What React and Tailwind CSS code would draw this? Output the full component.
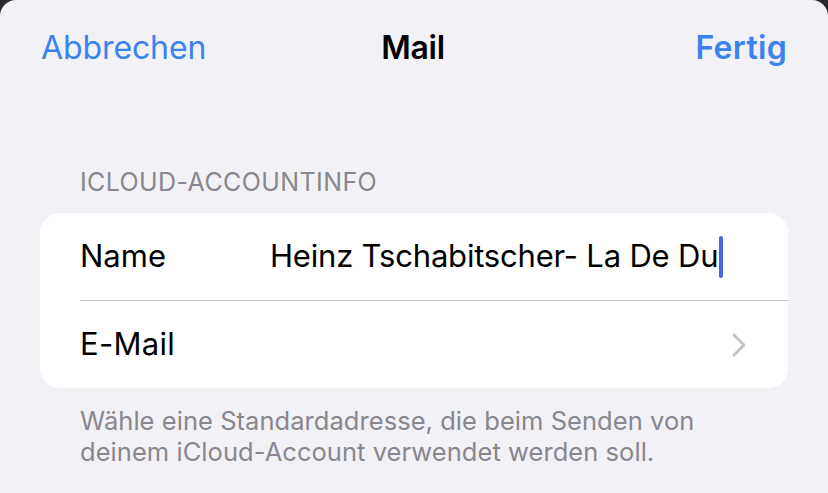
import React from 'react';

const Chevron = () => (
  <svg width="14" height="24" viewBox="0 0 14 24" fill="none">
    <path d="M2 2 L12 12 L2 22" stroke="#c4c4c7" strokeWidth="3" strokeLinecap="round" strokeLinejoin="round" />
  </svg>
);

export default function App() {
  return (
    <div className="w-[828px] h-[493px] bg-[#2a2a2c] overflow-hidden" style={{ fontFamily: 'Inter, "Noto Sans", sans-serif' }}>
      <div className="h-full bg-[#f2f1f6] rounded-t-[16px]">
        {/* nav bar */}
        <div className="grid grid-cols-3 items-center px-[41px] pt-[26px] h-[90px] pb-[20px]">
          <button className="justify-self-start text-[32px] text-[#3a82f0] leading-none tracking-[-0.1px]">Abbrechen</button>
          <h1 className="justify-self-center ml-[-2px] text-[32px] font-semibold text-black leading-none tracking-[-0.3px]">Mail</h1>
          <button className="justify-self-end text-[32px] font-semibold text-[#3a82f0] leading-none tracking-[0.3px]">Fertig</button>
        </div>

        <div className="px-[40px] pt-[80px]">
          <p className="pl-[40px] text-[25px] text-[#88878d] leading-none tracking-[0.4px]">ICLOUD-ACCOUNTINFO</p>

          <div className="mt-[18px] bg-white rounded-[20px]">
            <div className="flex items-center h-[87px] pl-[40px]">
              <span className="w-[190px] text-[31px] text-black tracking-[0px]">Name</span>
              <span className="text-[31px] text-black tracking-[-0.2px]">Heinz Tschabitscher- La De Du</span>
              <span className="ml-[1px] w-[4px] h-[42px] bg-[#4566e0] rounded-full"></span>
            </div>
            <div className="ml-[40px] h-px bg-[#c9c9cc]"></div>
            <div className="flex items-center justify-between h-[87px] pl-[40px] pr-[42px]">
              <span className="text-[31px] text-black tracking-[0.3px]">E-Mail</span>
              <Chevron />
            </div>
          </div>

          <p className="pl-[40px] pr-[60px] mt-[17px] text-[25.5px] leading-[31px] text-[#88878d] tracking-[0.05px]">
            Wähle eine Standardadresse, die beim Senden von deinem iCloud-Account verwendet werden soll.
          </p>
        </div>
      </div>
    </div>
  );
}
